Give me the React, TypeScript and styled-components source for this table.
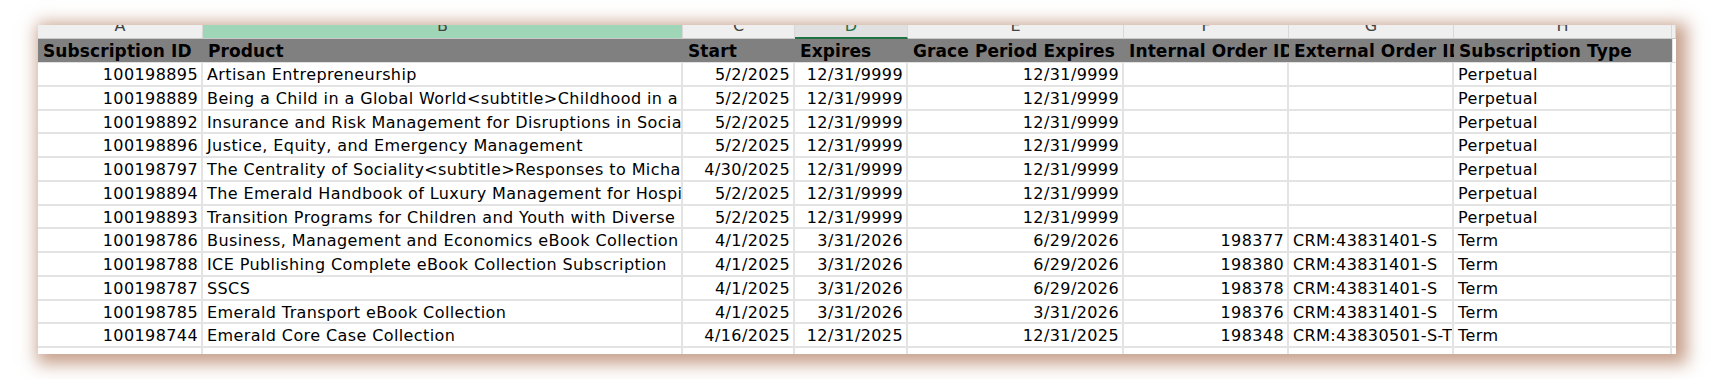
import styled, { createGlobalStyle } from "styled-components";

const GlobalStyle = createGlobalStyle`
  html, body {
    margin: 0;
    padding: 0;
    background: #ffffff;
  }
`;

const Page = styled.div`
  padding: 25px 0 0 38px;
  height: 379px;
  box-sizing: border-box;
`;

const Panel = styled.div`
  width: 1638px;
  height: 329px;
  overflow: hidden;
  background: #ffffff;
  box-shadow: 5px 4px 16px 6px rgba(180, 128, 102, 0.75);
  display: grid;
  grid-template-columns: 165px 480px 112px 113px 216px 165px 165px 218px 4px;
  align-content: start;
  font-family: "DejaVu Sans", Verdana, sans-serif;
  font-size: 16px;
  color: #000000;
`;

const Letter = styled.div<{ $variant?: "selected" | "active" }>`
  height: 14px;
  box-sizing: border-box;
  overflow: hidden;
  display: flex;
  align-items: flex-end;
  justify-content: center;
  background: ${(p) =>
    p.$variant === "selected" ? "#a0d6b8" : p.$variant === "active" ? "#e1e1e1" : "#efefef"};
  border-right: 1px solid #d8d8d8;
  border-bottom: ${(p) => (p.$variant === "active" ? "2px solid #217346" : "1px solid #c9c9c9")};
  color: ${(p) => (p.$variant === "active" ? "#217346" : "#444444")};
  span {
    line-height: 1;
    padding-bottom: ${(p) => (p.$variant === "active" ? "3px" : "4px")};
  }
`;

const HeadCell = styled.div<{ $blank?: boolean }>`
  height: 24px;
  box-sizing: border-box;
  background: ${(p) => (p.$blank ? "#ffffff" : "#808080")};
  border-left: ${(p) => (p.$blank ? "1px solid #e1e1e1" : "none")};
  border-bottom: 1px solid #e1e1e1;
  font-weight: bold;
  font-size: 17px;
  letter-spacing: 0.1px;
  white-space: nowrap;
  overflow: hidden;
  padding: 1px 0 0 5px;
  display: flex;
  align-items: center;
`;

const Cell = styled.div<{ $h: number; $right?: boolean }>`
  height: ${(p) => p.$h}px;
  box-sizing: border-box;
  border-right: 2px solid #e3e3e3;
  border-bottom: 2px solid #e3e3e3;
  letter-spacing: 0.4px;
  white-space: nowrap;
  overflow: hidden;
  display: flex;
  align-items: center;
  justify-content: ${(p) => (p.$right ? "flex-end" : "flex-start")};
  padding: 1px ${(p) => (p.$right ? "3px" : "0")} 0 ${(p) => (p.$right ? "0" : "4px")};
`;

const letters = ["A", "B", "C", "D", "E", "F", "G", "H", ""];

const headers = [
  "Subscription ID",
  "Product",
  "Start",
  "Expires",
  "Grace Period Expires",
  "Internal Order ID",
  "External Order ID",
  "Subscription Type",
];

const rightAligned = [true, false, true, true, true, true, false, false, false];

const rows: string[][] = [
  ["100198895", "Artisan Entrepreneurship", "5/2/2025", "12/31/9999", "12/31/9999", "", "", "Perpetual"],
  ["100198889", "Being a Child in a Global World<subtitle>Childhood in a Global World", "5/2/2025", "12/31/9999", "12/31/9999", "", "", "Perpetual"],
  ["100198892", "Insurance and Risk Management for Disruptions in Social, Economic and Environmental Systems", "5/2/2025", "12/31/9999", "12/31/9999", "", "", "Perpetual"],
  ["100198896", "Justice, Equity, and Emergency Management", "5/2/2025", "12/31/9999", "12/31/9999", "", "", "Perpetual"],
  ["100198797", "The Centrality of Sociality<subtitle>Responses to Michael Hogan", "4/30/2025", "12/31/9999", "12/31/9999", "", "", "Perpetual"],
  ["100198894", "The Emerald Handbook of Luxury Management for Hospitality and Tourism", "5/2/2025", "12/31/9999", "12/31/9999", "", "", "Perpetual"],
  ["100198893", "Transition Programs for Children and Youth with Diverse Needs", "5/2/2025", "12/31/9999", "12/31/9999", "", "", "Perpetual"],
  ["100198786", "Business, Management and Economics eBook Collection", "4/1/2025", "3/31/2026", "6/29/2026", "198377", "CRM:43831401-S", "Term"],
  ["100198788", "ICE Publishing Complete eBook Collection Subscription", "4/1/2025", "3/31/2026", "6/29/2026", "198380", "CRM:43831401-S", "Term"],
  ["100198787", "SSCS", "4/1/2025", "3/31/2026", "6/29/2026", "198378", "CRM:43831401-S", "Term"],
  ["100198785", "Emerald Transport eBook Collection", "4/1/2025", "3/31/2026", "3/31/2026", "198376", "CRM:43831401-S", "Term"],
  ["100198744", "Emerald Core Case Collection", "4/16/2025", "12/31/2025", "12/31/2025", "198348", "CRM:43830501-S-T", "Term"],
];

const rowTop = 63;
const rowStep = 23.75;
const rowHeight = (i: number) =>
  Math.round(rowTop + (i + 1) * rowStep) - Math.round(rowTop + i * rowStep);

export default function App() {
  return (
    <>
      <GlobalStyle />
      <Page>
        <Panel>
          {letters.map((l, i) => (
            <Letter key={`l${i}`} $variant={l === "B" ? "selected" : l === "D" ? "active" : undefined}>
              <span>{l}</span>
            </Letter>
          ))}
          {headers.map((h) => (
            <HeadCell key={h}>{h}</HeadCell>
          ))}
          <HeadCell $blank />
          {rows.map((r, ri) =>
            [...r, ""].map((v, ci) => (
              <Cell key={`${ri}-${ci}`} $h={rowHeight(ri)} $right={rightAligned[ci]}>
                {v}
              </Cell>
            ))
          )}
          {letters.map((_, ci) => (
            <Cell key={`end-${ci}`} $h={8} />
          ))}
        </Panel>
      </Page>
    </>
  );
}
